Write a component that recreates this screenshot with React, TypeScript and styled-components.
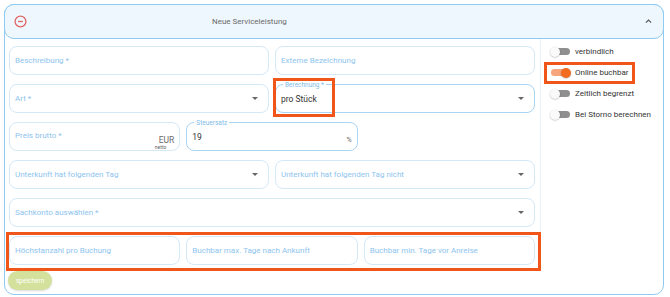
import React from "react";
import styled, { createGlobalStyle } from "styled-components";

const Global = createGlobalStyle`
  html, body { margin: 0; padding: 0; background: #fff; }
  body { font-family: Roboto, "Noto Sans", Arial, sans-serif; }
  * { box-sizing: border-box; }
`;

const Panel = styled.div`
  position: relative;
  margin: 4px;
  width: 660px;
  height: 291px;
  border: 1px solid #8fcaf0;
  border-radius: 10px;
`;

const Header = styled.div`
  height: 35px;
  margin: -1px -1px 0;
  display: flex;
  align-items: center;
  padding: 0 10px 0 9px;
  background: #eff7fe;
  border: 1px solid #8fcaf0;
  border-radius: 10px;
`;

const Title = styled.div`
  flex: 1;
  padding-left: 185px;
  font-size: 8px;
  color: #6a6a6a;
`;

const Body = styled.div`
  display: flex;
  height: 226px;
`;

const LeftCol = styled.div`
  width: 535px;
  padding: 7px 5px 0 4px;
  display: flex;
  flex-direction: column;
  gap: 9px;
`;

const RightCol = styled.div`
  flex: 1;
  border-left: 1px solid #e6f2fb;
  padding: 2px 0 0 9px;
  display: flex;
  flex-direction: column;
`;

const Row = styled.div<{ $cols: number }>`
  position: relative;
  display: grid;
  grid-template-columns: repeat(${(p) => p.$cols}, 1fr);
  gap: 6px;
`;

const Field = styled.div<{ $strong?: boolean }>`
  position: relative;
  height: 29px;
  border: 1px solid ${(p) => (p.$strong ? "#a9d5f3" : "#d3e9f8")};
  border-radius: 8px;
  display: flex;
  align-items: center;
  padding: 0 10px 0 5px;
  font-size: 8px;
`;

const Placeholder = styled.span<{ $top?: boolean }>`
  flex: 1;
  color: #8ec4ee;
  ${(p) => (p.$top ? "align-self: flex-start; margin-top: 8px;" : "")}
`;

const Value = styled.span`
  flex: 1;
  color: #333;
  font-size: 8.5px;
`;

const Legend = styled.span`
  position: absolute;
  top: -4px;
  left: 7px;
  padding: 0 2px;
  background: #fff;
  font-size: 6.5px;
  color: #7fbbe8;
  line-height: 8px;
`;

const Caret = styled.span`
  width: 0;
  height: 0;
  border-left: 3px solid transparent;
  border-right: 3px solid transparent;
  border-top: 3px solid #666;
`;

const Suffix = styled.span<{ $low?: boolean; $small?: boolean }>`
  color: #6a6a6a;
  font-size: ${(p) => (p.$small ? "7px" : "8.5px")};
  margin-right: -5px;
  margin-top: ${(p) => (p.$low ? "6px" : "0")};
`;

const Netto = styled.span`
  position: absolute;
  right: 13px;
  bottom: 0px;
  font-size: 5px;
  color: #666;
`;

const Highlight = styled.div`
  position: absolute;
  border: 3px solid #f0561a;
  pointer-events: none;
`;

const ToggleRow = styled.div`
  position: relative;
  height: 21px;
  display: flex;
  align-items: center;
  gap: 5px;
  font-size: 8px;
  color: #333;
  white-space: nowrap;
`;

const Track = styled.span<{ $on?: boolean }>`
  position: relative;
  flex: none;
  width: 19px;
  height: 7px;
  border-radius: 4px;
  background: ${(p) => (p.$on ? "#f6a57c" : "#8f8f8f")};
  margin-left: 1px;
`;

const Knob = styled.span<{ $on?: boolean }>`
  position: absolute;
  top: -1.5px;
  ${(p) => (p.$on ? "right: -1px;" : "left: -1px;")}
  width: 10px;
  height: 10px;
  border-radius: 50%;
  background: ${(p) => (p.$on ? "#f26b1f" : "#fafafa")};
  box-shadow: 0 0.5px 1.5px rgba(0, 0, 0, 0.3);
`;

const Footer = styled.div`
  display: flex;
  padding: 6px 0 0 3px;
`;

const SaveButton = styled.button`
  height: 19px;
  padding: 0 8px;
  border: none;
  border-radius: 10px;
  background: #d3e19c;
  color: #fff;
  font-family: inherit;
  font-size: 6.5px;
  box-shadow: 0 1px 2px rgba(0, 0, 0, 0.15);
`;

const MinusIcon = () => (
  <svg width="13" height="13" viewBox="0 0 24 24" fill="none" stroke="#e26565" strokeWidth="2.4">
    <circle cx="12" cy="12" r="10" />
    <line x1="7.5" y1="12" x2="16.5" y2="12" />
  </svg>
);

const ChevronUp = () => (
  <svg width="9" height="9" viewBox="0 0 24 24" fill="none" stroke="#555" strokeWidth="3">
    <polyline points="5,15 12,8 19,15" />
  </svg>
);

const Toggle = ({ on, label, highlight }: { on?: boolean; label: string; highlight?: boolean }) => (
  <ToggleRow>
    <Track $on={on}>
      <Knob $on={on} />
    </Track>
    <span>{label}</span>
    {highlight && <Highlight style={{ left: -6, top: 0, width: 91, height: 22 }} />}
  </ToggleRow>
);

export default function App() {
  return (
    <>
      <Global />
      <Panel>
        <Header>
          <MinusIcon />
          <Title>Neue Serviceleistung</Title>
          <ChevronUp />
        </Header>
        <Body>
          <LeftCol>
            <Row $cols={2}>
              <Field><Placeholder>Beschreibung *</Placeholder></Field>
              <Field><Placeholder>Externe Bezeichnung</Placeholder></Field>
            </Row>
            <Row $cols={2}>
              <Field><Placeholder>Art *</Placeholder><Caret /></Field>
              <Field $strong>
                <Highlight style={{ left: -3, top: -7, width: 62, height: 39 }} />
                <Legend>Berechnung *</Legend>
                <Value>pro Stück</Value>
                <Caret />
              </Field>
            </Row>
            <Row $cols={3}>
              <Field>
                <Placeholder $top>Preis brutto *</Placeholder>
                <Suffix $low>EUR</Suffix>
                <Netto>netto</Netto>
              </Field>
              <Field $strong>
                <Legend>Steuersatz</Legend>
                <Value>19</Value>
                <Suffix $small $low>%</Suffix>
              </Field>
            </Row>
            <Row $cols={2}>
              <Field><Placeholder>Unterkunft hat folgenden Tag</Placeholder><Caret /></Field>
              <Field><Placeholder>Unterkunft hat folgenden Tag nicht</Placeholder><Caret /></Field>
            </Row>
            <Row $cols={1}>
              <Field><Placeholder>Sachkonto auswählen *</Placeholder><Caret /></Field>
            </Row>
            <Row $cols={3}>
              <Field><Placeholder>Höchstanzahl pro Buchung</Placeholder></Field>
              <Field><Placeholder>Buchbar max. Tage nach Ankunft</Placeholder></Field>
              <Field><Placeholder>Buchbar min. Tage vor Anreise</Placeholder></Field>
              <Highlight style={{ left: -3, top: -4, right: -6, bottom: -6 }} />
            </Row>
          </LeftCol>
          <RightCol>
            <Toggle label="verbindlich" />
            <Toggle on label="Online buchbar" highlight />
            <Toggle label="Zeitlich begrenzt" />
            <Toggle label="Bei Storno berechnen" />
          </RightCol>
        </Body>
        <Footer>
          <SaveButton>speichern</SaveButton>
        </Footer>
      </Panel>
    </>
  );
}
